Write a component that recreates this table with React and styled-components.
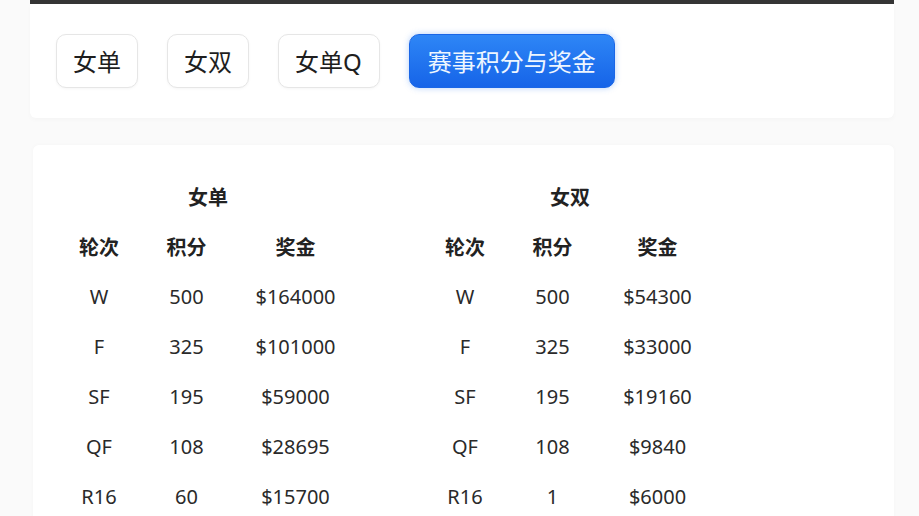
import styled, { createGlobalStyle } from 'styled-components';

const GlobalStyle = createGlobalStyle`
  html, body {
    margin: 0;
    padding: 0;
    background: #fafafa;
  }
  body {
    font-family: "Noto Sans", "Noto Sans CJK SC", sans-serif;
    color: #222;
  }
`;

const Page = styled.div`
  width: 919px;
  height: 516px;
  overflow: hidden;
  padding: 0 25px 0 30px;
  box-sizing: border-box;
`;

const TopStrip = styled.div`
  height: 4px;
  background: #353535;
`;

const TabCard = styled.div`
  background: #fff;
  padding: 30px 26px 30px 26px;
  display: flex;
  align-items: center;
  gap: 29px;
  box-shadow: 0 2px 5px rgba(0, 0, 0, 0.025);
  border-radius: 0 0 6px 6px;
`;

const Tab = styled.button`
  height: 54px;
  padding: 0 ${(p) => (p.$active ? '18px' : '16px')};
  border-radius: 10px;
  font-family: "Noto Sans CJK SC", sans-serif;
  font-size: 24px;
  line-height: 1;
  cursor: pointer;
  border: ${(p) => (p.$active ? '1px solid #1a66e6' : '1px solid #e6e6e6')};
  color: ${(p) => (p.$active ? '#eef6ff' : '#1e1e1e')};
  background: ${(p) => (p.$active ? 'linear-gradient(180deg, #2e86f6 0%, #1664e8 100%)' : '#fff')};
  box-shadow: ${(p) =>
    p.$active ? '0 0 6px rgba(40, 120, 240, 0.35)' : '0 1px 3px rgba(0, 0, 0, 0.04)'};
`;

const Latin = styled.span`
  font-family: "Noto Sans", sans-serif;
  letter-spacing: 1px;
`;

const TablesCard = styled.div`
  margin-top: 27px;
  margin-left: 3px;
  background: #fff;
  padding: 26px 22px 0 22px;
  display: flex;
  gap: 60px;
  height: 400px;
  box-shadow: 0 0 5px rgba(0, 0, 0, 0.025);
  border-radius: 6px;
`;

const Table = styled.div`
  display: grid;
  grid-template-columns: ${(p) => p.$cols};
  grid-auto-rows: 50px;
  align-items: center;
  justify-items: center;
`;

const Title = styled.div`
  grid-column: 1 / -1;
  font-family: "Noto Sans CJK SC", sans-serif;
  font-weight: 700;
  font-size: 20px;
  color: #222;
`;

const Head = styled.div`
  font-family: "Noto Sans CJK SC", sans-serif;
  font-weight: 700;
  font-size: 20px;
  color: #222;
`;

const Cell = styled.div`
  font-family: "Noto Sans", sans-serif;
  font-size: 20px;
  color: #2a2a2a;
`;

const singles = [
  ['W', '500', '$164000'],
  ['F', '325', '$101000'],
  ['SF', '195', '$59000'],
  ['QF', '108', '$28695'],
  ['R16', '60', '$15700'],
];

const doubles = [
  ['W', '500', '$54300'],
  ['F', '325', '$33000'],
  ['SF', '195', '$19160'],
  ['QF', '108', '$9840'],
  ['R16', '1', '$6000'],
];

const PrizeTable = ({ title, rows, cols }) => (
  <Table $cols={cols}>
    <Title>{title}</Title>
    <Head>轮次</Head>
    <Head>积分</Head>
    <Head>奖金</Head>
    {rows.map((r) =>
      r.map((c, i) => <Cell key={r[0] + i}>{c}</Cell>)
    )}
  </Table>
);

export default function App() {
  return (
    <Page>
      <GlobalStyle />
      <TopStrip />
      <TabCard>
        <Tab>女单</Tab>
        <Tab>女双</Tab>
        <Tab>
          女单<Latin>Q</Latin>
        </Tab>
        <Tab $active>赛事积分与奖金</Tab>
      </TabCard>
      <TablesCard>
        <PrizeTable title="女单" rows={singles} cols="88px 87px 131px" />
        <PrizeTable title="女双" rows={doubles} cols="88px 87px 123px" />
      </TablesCard>
    </Page>
  );
}
